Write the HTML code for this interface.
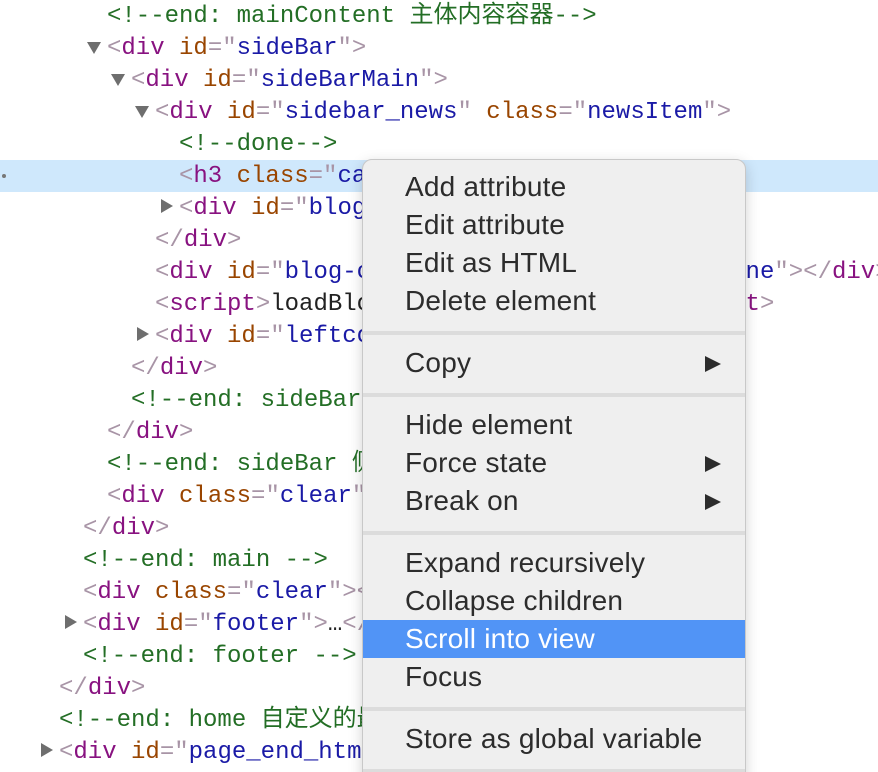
<!DOCTYPE html>
<html style="overflow:hidden;height:772px"><head><meta charset="utf-8"><style>
body{margin:0;width:878px;height:772px;overflow:hidden;background:#fff;position:relative;font-family:"Liberation Mono","Noto Sans CJK SC",monospace;}
.l{position:absolute;left:0;height:32px;line-height:34px;font-size:24px;white-space:pre;}
.b{color:#a894a6}.t{color:#881280}.a{color:#994500}.v{color:#1a1aa6}.c{color:#236e25}.k{color:#222}
.tri{position:absolute;width:0;height:0;}
.down{border-left:7px solid transparent;border-right:7px solid transparent;border-top:12px solid #6e6e6e;}
.right{border-top:7px solid transparent;border-bottom:7px solid transparent;border-left:12px solid #6e6e6e;}
.hl{position:absolute;left:0;top:160px;width:878px;height:32px;background:#cfe8fc;}
.menu{position:absolute;left:362px;top:159px;width:382px;height:640px;background:#efefef;border:1px solid #c8c8c8;border-radius:10px;box-shadow:0 4px 14px rgba(0,0,0,.18);font-family:"Liberation Sans",sans-serif;font-size:28px;letter-spacing:0.2px;color:#2c2c2c;}
.mi{position:absolute;left:0;width:382px;height:38px;line-height:38px;padding-left:42px;box-sizing:border-box;}
.sep{position:absolute;left:0;width:382px;height:4px;background:#dcdcdc;}
.arr{position:absolute;right:24px;top:12px;width:0;height:0;border-top:8px solid transparent;border-bottom:8px solid transparent;border-left:16px solid #2c2c2c;}
.sel{background:#5194f6;color:#fff;}
.wrap{position:absolute;left:0;top:0;width:878px;height:772px;overflow:hidden;}
</style></head><body><div class="wrap">
<div class="hl"></div>
<div style="position:absolute;left:2px;top:174px;width:4px;height:4px;border-radius:2px;background:#777"></div>

<div class="l" style="top:0;left:107px"><span class="c">&lt;!--end: mainContent 主体内容容器--&gt;</span></div>
<div class="tri down" style="left:87px;top:42px"></div>
<div class="l" style="top:32px;left:107px"><span class="b">&lt;</span><span class="t">div</span> <span class="a">id</span><span class="b">="</span><span class="v">sideBar</span><span class="b">"&gt;</span></div>
<div class="tri down" style="left:111px;top:74px"></div>
<div class="l" style="top:64px;left:131px"><span class="b">&lt;</span><span class="t">div</span> <span class="a">id</span><span class="b">="</span><span class="v">sideBarMain</span><span class="b">"&gt;</span></div>
<div class="tri down" style="left:135px;top:106px"></div>
<div class="l" style="top:96px;left:155px"><span class="b">&lt;</span><span class="t">div</span> <span class="a">id</span><span class="b">="</span><span class="v">sidebar_news</span><span class="b">"</span> <span class="a">class</span><span class="b">="</span><span class="v">newsItem</span><span class="b">"&gt;</span></div>
<div class="l" style="top:128px;left:179px"><span class="c">&lt;!--done--&gt;</span></div>
<div class="l" style="top:160px;left:179px"><span class="b">&lt;</span><span class="t">h3</span> <span class="a">class</span><span class="b">="</span><span class="v">catListTitle</span><span class="b">"&gt;</span></div>
<div class="tri right" style="left:161px;top:199px"></div>
<div class="l" style="top:192px;left:179px"><span class="b">&lt;</span><span class="t">div</span> <span class="a">id</span><span class="b">="</span><span class="v">blog-news</span><span class="b">"&gt;</span></div>
<div class="l" style="top:224px;left:155px"><span class="b">&lt;/</span><span class="t">div</span><span class="b">&gt;</span></div>
<div class="l" style="top:256px;left:155px"><span class="b">&lt;</span><span class="t">div</span> <span class="a">id</span><span class="b">="</span><span class="v">blog-calendar</span><span class="b">"</span> <span class="a">style</span><span class="b">="</span><span class="v">display:none</span><span class="b">"&gt;&lt;/</span><span class="t">div</span><span class="b">&gt;</span></div>
<div class="l" style="top:288px;left:155px"><span class="b">&lt;</span><span class="t">script</span><span class="b">&gt;</span><span class="k">loadBlogDefaultCalendar();</span><span class="b">&lt;/</span><span class="t">script</span><span class="b">&gt;</span></div>
<div class="tri right" style="left:137px;top:327px"></div>
<div class="l" style="top:320px;left:155px"><span class="b">&lt;</span><span class="t">div</span> <span class="a">id</span><span class="b">="</span><span class="v">leftcontentcontainer</span><span class="b">"&gt;</span></div>
<div class="l" style="top:352px;left:131px"><span class="b">&lt;/</span><span class="t">div</span><span class="b">&gt;</span></div>
<div class="l" style="top:384px;left:131px"><span class="c">&lt;!--end: sideBarMain --&gt;</span></div>
<div class="l" style="top:416px;left:107px"><span class="b">&lt;/</span><span class="t">div</span><span class="b">&gt;</span></div>
<div class="l" style="top:448px;left:107px"><span class="c">&lt;!--end: sideBar 侧边栏容器 --&gt;</span></div>
<div class="l" style="top:480px;left:107px"><span class="b">&lt;</span><span class="t">div</span> <span class="a">class</span><span class="b">="</span><span class="v">clear</span><span class="b">"&gt;&lt;/</span><span class="t">div</span><span class="b">&gt;</span></div>
<div class="l" style="top:512px;left:83px"><span class="b">&lt;/</span><span class="t">div</span><span class="b">&gt;</span></div>
<div class="l" style="top:544px;left:83px"><span class="c">&lt;!--end: main --&gt;</span></div>
<div class="l" style="top:576px;left:83px"><span class="b">&lt;</span><span class="t">div</span> <span class="a">class</span><span class="b">="</span><span class="v">clear</span><span class="b">"&gt;&lt;/</span><span class="t">div</span><span class="b">&gt;</span></div>
<div class="tri right" style="left:65px;top:615px"></div>
<div class="l" style="top:608px;left:83px"><span class="b">&lt;</span><span class="t">div</span> <span class="a">id</span><span class="b">="</span><span class="v">footer</span><span class="b">"&gt;</span><span class="k">…</span><span class="b">&lt;/</span><span class="t">div</span><span class="b">&gt;</span></div>
<div class="l" style="top:640px;left:83px"><span class="c">&lt;!--end: footer --&gt;</span></div>
<div class="l" style="top:672px;left:59px"><span class="b">&lt;/</span><span class="t">div</span><span class="b">&gt;</span></div>
<div class="l" style="top:704px;left:59px"><span class="c">&lt;!--end: home 自定义的最大容器 --&gt;</span></div>
<div class="tri right" style="left:41px;top:743px"></div>
<div class="l" style="top:736px;left:59px"><span class="b">&lt;</span><span class="t">div</span> <span class="a">id</span><span class="b">="</span><span class="v">page_end_html</span><span class="b">"&gt;</span></div>

<div class="menu">
<div class="mi" style="top:8px">Add attribute</div>
<div class="mi" style="top:46px">Edit attribute</div>
<div class="mi" style="top:84px">Edit as HTML</div>
<div class="mi" style="top:122px">Delete element</div>
<div class="sep" style="top:171px"></div>
<div class="mi" style="top:184px">Copy<span class="arr"></span></div>
<div class="sep" style="top:233px"></div>
<div class="mi" style="top:246px">Hide element</div>
<div class="mi" style="top:284px">Force state<span class="arr"></span></div>
<div class="mi" style="top:322px">Break on<span class="arr"></span></div>
<div class="sep" style="top:371px"></div>
<div class="mi" style="top:384px">Expand recursively</div>
<div class="mi" style="top:422px">Collapse children</div>
<div class="mi sel" style="top:460px">Scroll into view</div>
<div class="mi" style="top:498px">Focus</div>
<div class="sep" style="top:547px"></div>
<div class="mi" style="top:560px">Store as global variable</div>
<div class="sep" style="top:609px"></div>
</div>
</div></body></html>
